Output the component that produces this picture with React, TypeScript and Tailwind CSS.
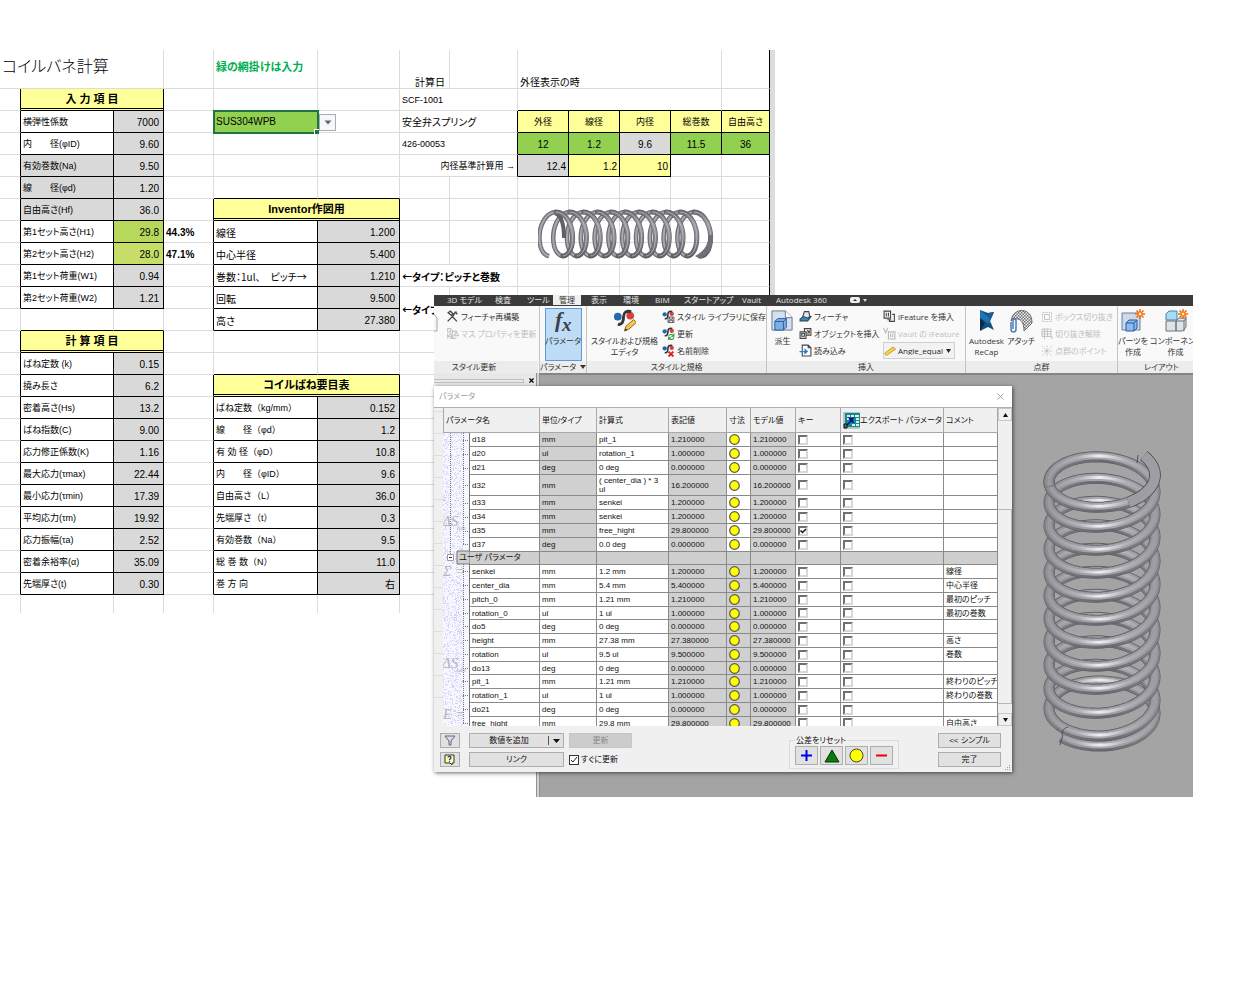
import React from 'react';
import { X } from 'lucide-react';
import clsx from 'clsx';

type Cell = {
  text?: React.ReactNode;
  cls?: string;
  boxed?: boolean;
  span?: number;
  rowSpan?: number;
};

type Param = {
  name: string;
  unit: string;
  formula: string;
  value: string;
  keyed?: boolean;
  comment?: string;
};

const COL_COUNT = 13;
const ROW_COUNT = 25;

const cells: Record<string, Cell> = {};
const put = (r: number, c: number, cell: Cell) => {
  cells[`${r},${c}`] = cell;
};

const LABEL = 'pl-[2px] text-[9px]';
const LABEL_WIDE = "pl-[2px] text-[9px] [font-feature-settings:'palt'_0]";
const LABEL_GRAY = 'pl-[2px] text-[9px] bg-[#d9d9d9]';
const NOTE = "pl-[2px] text-[10px] font-bold font-['Noto_Sans_CJK_JP',sans-serif]";
const NUM = 'pr-1 text-right text-[10px] bg-[#d9d9d9]';
const HEAD = 'text-center text-[11px] font-bold bg-[#ffff99] border-b-[3px] border-double';
const SMALL_HEAD = 'text-center text-[9px] bg-[#ffff99]';
const GREEN = 'text-center text-[10px] bg-[#92d050]';

const inputItems: [string, string, string?][] = [
  ['横弾性係数', '7000'],
  ['内　　径(φID)', '9.60'],
  ['有効巻数(Na)', '9.50', LABEL_GRAY],
  ['線　　径(φd)', '1.20', LABEL_GRAY],
  ['自由高さ(Hf)', '36.0', LABEL_GRAY],
  ['第1セット高さ(H1)', '29.8'],
  ['第2セット高さ(H2)', '28.0'],
  ['第1セット荷重(W1)', '0.94'],
  ['第2セット荷重(W2)', '1.21'],
];

const calcItems: [string, string][] = [
  ['ばね定数 (k)', '0.15'],
  ['撓み長さ', '6.2'],
  ['密着高さ(Hs)', '13.2'],
  ['ばね指数(C)', '9.00'],
  ['応力修正係数(K)', '1.16'],
  ['最大応力(τmax)', '22.44'],
  ['最小応力(τmin)', '17.39'],
  ['平均応力(τm)', '19.92'],
  ['応力振幅(τa)', '2.52'],
  ['密着余裕率(α)', '35.09'],
  ['先端厚さ(t)', '0.30'],
];

const drawItems: [string, string][] = [
  ['線径', '1.200'],
  ['中心半径', '5.400'],
  ['巻数：1ul、　ピッチ→', '1.210'],
  ['回転', '9.500'],
  ['高さ', '27.380'],
];

const specItems: [string, string][] = [
  ['ばね定数（kg/mm）', '0.152'],
  ['線　　径（φd）', '1.2'],
  ['有 効 径（φD）', '10.8'],
  ['内　　径（φID）', '9.6'],
  ['自由高さ（L）', '36.0'],
  ['先端厚さ（t）', '0.3'],
  ['有効巻数（Na）', '9.5'],
  ['総 巻 数（N）', '11.0'],
  ['巻 方 向', '右'],
];

put(0, 0, { text: 'コイルバネ計算', cls: 'pl-[2px] pb-1 text-base font-light', span: 3 });
put(0, 4, { text: '緑の網掛けは入力', cls: 'pl-[2px] pb-1 text-[11px] font-bold text-[#00b050]' });
put(0, 6, { text: '計算日', cls: 'pr-1 text-right align-bottom text-[10px]' });
put(0, 8, { text: '外径表示の時', cls: 'pl-[2px] align-bottom text-[10px]', span: 4 });
put(1, 1, { text: '入 力 項 目', cls: HEAD, boxed: true, span: 2 });
put(1, 6, { text: 'SCF-1001', cls: 'pl-[2px] text-[9px]', span: 2 });
put(1, 8, { span: 4 });
put(2, 4, { text: <MaterialSelect />, cls: 'relative' });
put(2, 6, { text: '安全弁スプリング', cls: 'pl-[2px] text-[10px]', span: 2 });
put(3, 6, { text: '426-00053', cls: 'pl-[2px] text-[9px]', span: 2 });
put(4, 6, { text: '内径基準計算用 →', cls: 'pr-[2px] text-right text-[9px]', span: 2 });
['外径', '線径', '内径', '総巻数', '自由高さ'].forEach((t, i) => put(2, 8 + i, { text: t, cls: SMALL_HEAD, boxed: true }));
['12', '1.2', '9.6', '11.5', '36'].forEach((t, i) =>
  put(3, 8 + i, { text: t, cls: i === 2 ? 'text-center text-[10px] bg-[#d9d9d9]' : GREEN, boxed: true })
);
put(4, 8, { text: '12.4', cls: 'pr-[2px] text-right text-[10px] bg-[#d9d9d9]', boxed: true });
put(4, 9, { text: '1.2', cls: 'pr-[2px] text-right text-[10px] bg-[#ffff99]', boxed: true });
put(4, 10, { text: '10', cls: 'pr-[2px] text-right text-[10px] bg-[#ffff99]', boxed: true });
inputItems.forEach(([label, value, cls], i) => {
  put(2 + i, 1, { text: label, cls: cls || LABEL, boxed: true });
  const bg = i === 5 ? 'bg-[#b8d85c]' : i === 6 ? 'bg-[#c6dd68]' : 'bg-[#d9d9d9]';
  put(2 + i, 2, { text: value, cls: clsx('pr-1 text-right text-[10px]', bg), boxed: true });
});
put(7, 3, { text: '44.3%', cls: 'pl-[2px] text-[10px] font-bold' });
put(8, 3, { text: '47.1%', cls: 'pl-[2px] text-[10px] font-bold' });
put(6, 4, { text: 'Inventor作図用', cls: HEAD, boxed: true, span: 2 });
drawItems.forEach(([label, value], i) => {
  put(7 + i, 4, { text: label, cls: "pl-[2px] text-[10px] font-['Noto_Sans_CJK_JP',sans-serif]", boxed: true });
  put(7 + i, 5, { text: value, cls: NUM, boxed: true });
});
put(9, 6, { text: '←タイプ：ピッチと巻数', cls: NOTE, span: 2 });
put(10, 6, { text: '←タイプ', cls: NOTE, rowSpan: 2 });
put(12, 1, { text: '計 算 項 目', cls: HEAD, boxed: true, span: 2 });
calcItems.forEach(([label, value], i) => {
  put(13 + i, 1, { text: label, cls: LABEL, boxed: true });
  put(13 + i, 2, { text: value, cls: NUM, boxed: true });
});
put(14, 4, { text: 'コイルばね要目表', cls: HEAD, boxed: true, span: 2 });
specItems.forEach(([label, value], i) => {
  put(15 + i, 4, { text: label, cls: LABEL_WIDE, boxed: true });
  put(15 + i, 5, { text: value, cls: NUM, boxed: true });
});

// every grid slot points at the cell that covers it
const owner: Record<string, string> = {};
Object.entries(cells).forEach(([key, cell]) => {
  const [r, c] = key.split(',').map(Number);
  for (let y = 0; y < (cell.rowSpan || 1); y++) {
    for (let x = 0; x < (cell.span || 1); x++) owner[`${r + y},${c + x}`] = key;
  }
});
const isBoxed = (r: number, c: number) => !!cells[owner[`${r},${c}`]]?.boxed;

function MaterialSelect() {
  return (
    <>
      <select
        aria-label="材質"
        className="absolute -left-px -top-px z-10 h-[24px] w-[106px] appearance-none border-2 border-[#217346] bg-[#92d050] pl-px text-[10px] outline-none"
      >
        <option>SUS304WPB</option>
      </select>
      <span className="absolute -bottom-[2px] -right-[2px] z-10 size-[5px] border-l border-t border-white bg-[#217346]" />
      <span className="absolute left-[105px] top-[3px] z-10 flex size-[17px] items-center justify-center border border-[#a8aeb8] bg-[#f6f7f9]">
        <svg width="8" height="5" viewBox="0 0 8 5">
          <path d="M0.5 0.5h7L4 4.5z" fill="#666" />
        </svg>
      </span>
    </>
  );
}

const Sheet: React.FC = () => (
  <div className="relative flex w-max pt-[50px]">
    <table className="w-[770px] table-fixed border-separate border-spacing-0">
      <colgroup>
        <col className="w-[21px]" />
        <col className="w-[93px]" />
        <col className="w-[50px]" />
        <col className="w-[50px]" />
        <col className="w-[104px]" />
        <col className="w-[82px]" />
        <col className="w-[50px]" />
        <col className="w-[68px]" />
        <col className="w-[51px]" />
        <col className="w-[51px]" />
        <col className="w-[51px]" />
        <col className="w-[51px]" />
        <col className="w-[48px]" />
      </colgroup>
      <tbody>
        {[...Array(ROW_COUNT)].map((_, r) => (
          <tr key={r} className={r === 0 ? 'h-[39px]' : r === ROW_COUNT - 1 ? 'h-[18px]' : 'h-[22px]'}>
            {[...Array(COL_COUNT)].map((_, c) => {
              const key = `${r},${c}`;
              if (owner[key] && owner[key] !== key) return null;
              const cell = cells[key] || {};
              const nextCol = c + (cell.span || 1);
              const nextRow = r + (cell.rowSpan || 1);
              const blackRight = cell.boxed || isBoxed(r, nextCol) || nextCol === COL_COUNT;
              const blackBottom = cell.boxed || isBoxed(nextRow, c);
              return (
                <td
                  key={key}
                  colSpan={cell.span}
                  rowSpan={cell.rowSpan}
                  className={clsx(
                    'whitespace-nowrap border-r p-0 leading-none',
                    r > 0 && 'pt-[2px]',
                    r < ROW_COUNT - 1 && !cell.cls?.includes('border-b-') && 'border-b',
                    blackRight ? 'border-r-black' : 'border-r-[#dcdcdc]',
                    blackBottom ? 'border-b-black' : 'border-b-[#dcdcdc]',
                    cell.cls
                  )}
                >
                  {cell.text}
                </td>
              );
            })}
          </tr>
        ))}
      </tbody>
    </table>
    <div className="w-[5px] bg-[#dcdcdc]" />
    <div className="absolute left-[538px] top-[206px]">
      <FlatSpring />
    </div>
  </div>
);

const toPath = (pts: number[][]) => 'M' + pts.map(([x, y]) => `${x.toFixed(1)} ${y.toFixed(1)}`).join('L');

const FlatSpring: React.FC = () => {
  const half = (k: number, front: boolean) => {
    const pts: number[][] = [];
    for (let i = 0; i <= 16; i++) {
      const a = (front ? -90 : 90) + (i * 180) / 16;
      const rad = (a * Math.PI) / 180;
      const turn = k + (a + 90) / 360;
      pts.push([18 + turn * 13.8 + 13 * Math.cos(rad), 28 + 22 * Math.sin(rad)]);
    }
    return toPath(pts);
  };
  const turns = [...Array(11)].map((_, i) => i);
  return (
    <svg width="178" height="56" viewBox="0 0 178 56" fill="none">
      <defs>
        <linearGradient id="flatShade" x1="0" y1="4" x2="0" y2="52" gradientUnits="userSpaceOnUse">
          <stop offset="0" stopColor="#68686e" />
          <stop offset="0.3" stopColor="#98989e" />
          <stop offset="0.6" stopColor="#85858b" />
          <stop offset="1" stopColor="#5c5c62" />
        </linearGradient>
      </defs>
      {[-1, ...turns.slice(0, -1)].map((k) => (
        <g key={k}>
          <path d={half(k, false)} stroke="#707076" strokeWidth="4.6" />
          <path d={half(k, false)} stroke="#a8a8ae" strokeWidth="2" />
        </g>
      ))}
      <path d="M17 7c6 2 9 10 9 25" stroke="#606066" strokeWidth="4" />
      {turns.map((k) => (
        <g key={k}>
          <path d={half(k, true)} stroke="#606066" strokeWidth="5" strokeLinecap="round" />
          <path d={half(k, true)} stroke="url(#flatShade)" strokeWidth="3.8" strokeLinecap="round" />
          <path d={half(k, true)} stroke="#c6c6cc" strokeWidth="1" opacity="0.7" />
        </g>
      ))}
      <path d="M171 29h4c0 11-5 20-13 24l-5-3c8-4 13-10 14-21z" fill="#707077" />
    </svg>
  );
};

// centre line height of each coil where it passes the front
const COILS = [61, 81, 104, 127, 151, 174, 197, 220, 243, 267, 290, 300];

const TallSpring: React.FC = () => {
  const heightAt = (t: number) => {
    const i = Math.max(0, Math.min(COILS.length - 2, Math.floor(t)));
    return COILS[i] + (COILS[i + 1] - COILS[i]) * (t - i);
  };
  const arc = (k: number, from: number, to: number) => {
    const pts: number[][] = [];
    for (let i = 0; i <= 28; i++) {
      const a = from + ((to - from) * i) / 28;
      const rad = (a * Math.PI) / 180;
      const t = k + (a - 90) / 360;
      const base = t < 0 ? COILS[0] + t * 8 : heightAt(t);
      pts.push([62 + 53 * Math.cos(rad), base - 30 + 30 * Math.sin(rad)]);
    }
    return toPath(pts);
  };
  const tube = (d: string, key: string) => (
    <g key={key}>
      <path d={d} stroke="#5a5a60" strokeWidth="11" />
      <path d={d} stroke="url(#tubeBase)" strokeWidth="10" />
      <path d={d} stroke="url(#tubeMid)" strokeWidth="7" transform="translate(0 -1)" />
      <path d={d} stroke="url(#tubeShine)" strokeWidth="3" transform="translate(0 -1)" />
    </g>
  );
  const ks = COILS.map((_, i) => i);
  const face = arc(0, -38, 60);
  return (
    <svg width="124" height="324" viewBox="0 0 124 324" fill="none" role="img" aria-label="コイルばね">
      <defs>
        <linearGradient id="tubeBase" x1="3" y1="0" x2="121" y2="0" gradientUnits="userSpaceOnUse">
          <stop offset="0" stopColor="#808085" />
          <stop offset="0.5" stopColor="#68686e" />
          <stop offset="1" stopColor="#85858a" />
        </linearGradient>
        <linearGradient id="tubeMid" x1="3" y1="0" x2="121" y2="0" gradientUnits="userSpaceOnUse">
          <stop offset="0" stopColor="#8f8f94" />
          <stop offset="0.5" stopColor="#a8a8ae" />
          <stop offset="1" stopColor="#97979c" />
        </linearGradient>
        <linearGradient id="tubeShine" x1="3" y1="0" x2="121" y2="0" gradientUnits="userSpaceOnUse">
          <stop offset="0" stopColor="#96969b" />
          <stop offset="0.3" stopColor="#b2b2b8" />
          <stop offset="0.48" stopColor="#eeeef2" />
          <stop offset="0.7" stopColor="#b2b2b8" />
          <stop offset="1" stopColor="#9a9aa0" />
        </linearGradient>
      </defs>
      {ks.slice(0, -1).reverse().map((k) => tube(arc(k, 180, 360), `b${k}`))}
      {ks.slice().reverse().map((k) => tube(arc(k, k === 0 ? -38 : -2, k === 11 ? 140 : 182), `f${k}`))}
      {tube(arc(0, 170, 215), 'join')}
      <path d={face} stroke="#48484e" strokeWidth="11.4" />
      <path d={face} stroke="#9d9da3" strokeWidth="10" />
      <path d="M98 9l-1 8" stroke="#3c3c42" strokeWidth="0.8" />
      <path d="M20 299l3-10M22 289c0-5 2-7 6-8" stroke="#3c3c42" strokeWidth="0.8" />
    </svg>
  );
};

const ink = '#444';

const StyleGlyph: React.FC<{ size: number; badge?: string }> = ({ size, badge }) => (
  <svg width={size} height={size} viewBox="0 0 24 24" fill="none" className="shrink-0">
    <circle cx="5" cy="8" r="4" fill="#2668a8" />
    <circle cx="18" cy="7" r="4" fill="#d84040" />
    <path d="M19 3c-5-2-8 1-8 5s-1 9-6 8" stroke="#33383f" strokeWidth="3" />
    {badge === 'pencil' && (
      <>
        <path d="M12 23l1.5-5 8-7 3 3-8 7z" fill="#f5c84c" stroke="#8a6418" />
        <path d="M12 23l1-3 2 2z" fill="#333" />
      </>
    )}
    {badge === 'save' && <path d="M11 13h11v10H11zM14 13v4h5v-4M13 23v-4h7v4" fill="#eee" stroke="#444" strokeWidth="1.5" />}
    {badge === 'refresh' && <path d="M12 18a5 5 0 0 1 9-2M22 19a5 5 0 0 1-9 2M22 12v5h-5M12 24v-4h5" stroke="#2f9e3f" strokeWidth="2" />}
    {badge === 'delete' && <path d="M12 14l9 9M21 14l-9 9" stroke="#d81e1e" strokeWidth="3.5" />}
  </svg>
);

const Glyph: React.FC<{ size?: number; children: React.ReactNode }> = ({ size = 13, children }) => (
  <svg width={size} height={size} viewBox="0 0 24 24" fill="none" stroke={ink} strokeWidth="2" className="shrink-0">
    {children}
  </svg>
);

const ToolRow: React.FC<{ icon: React.ReactNode; children: React.ReactNode; disabled?: boolean }> = ({ icon, children, disabled }) => (
  <button disabled={disabled} className={clsx('flex h-[17px] items-center gap-[2px] whitespace-nowrap', disabled ? 'text-[#bdbdbd]' : 'text-[#333]')}>
    {icon}
    {children}
  </button>
);

const BigTool: React.FC<{ icon: React.ReactNode; lines: string[] }> = ({ icon, lines }) => (
  <button className="flex shrink-0 flex-col items-center whitespace-nowrap leading-[11px] text-[#333]">
    <span className="mb-[2px] flex h-[25px] items-center">{icon}</span>
    {lines.map((l) => (
      <span key={l}>{l}</span>
    ))}
  </button>
);

const Group: React.FC<{ title: React.ReactNode; cls: string; children: React.ReactNode }> = ({ title, cls, children }) => (
  <section className={clsx('flex flex-col overflow-hidden border-r border-[#c4c4c4]', cls)}>
    <div className="flex h-[55px] pt-[2px]">{children}</div>
    <h3 className="flex h-[12px] items-center justify-center whitespace-nowrap bg-[#ececec] leading-[12px] text-[#333]">{title}</h3>
  </section>
);

const Ribbon: React.FC = () => (
  <header className="font-['Open_Sans','Noto_Sans_CJK_JP',sans-serif] text-[8px] leading-none">
    <nav className="flex h-[11px] items-center overflow-hidden whitespace-nowrap bg-[#3b3b3b] pb-[2px] pl-[13px] text-[#e4e4e4]">
      <a href="#model" className="w-[48px]">3D モデル</a>
      <a href="#inspect" className="w-[32px]">検査</a>
      <a href="#tool" className="w-[26px]">ツール</a>
      <a href="#manage" className="flex h-[11px] w-[28px] items-center justify-center bg-[#f0f0f0] text-[#333]">管理</a>
      <a href="#view" className="ml-[10px] w-[32px]">表示</a>
      <a href="#env" className="w-[32px]">環境</a>
      <a href="#bim" className="w-[29px]">BIM</a>
      <a href="#startup" className="w-[58px]">スタートアップ</a>
      <a href="#vault" className="w-[34px]">Vault</a>
      <a href="#a360" className="w-[74px]">Autodesk 360</a>
      <svg width="18" height="8" viewBox="0 0 18 8">
        <rect x="0" y="1" width="10" height="6" rx="2" fill="#eee" />
        <path d="M3 5l2-2 2 2z" fill="#333" />
        <path d="M13 3h4l-2 3z" fill="#ddd" />
      </svg>
    </nav>
    <div className="flex bg-[#f9f9f9]">
      <Group title={<span className="mr-6">スタイル更新</span>} cls="w-[106px] shrink-0 pr-[1px]">
        <svg width="4" height="24" viewBox="0 0 4 24" className="mt-1 shrink-0">
          <path d="M0 2l3 4v13H0" fill="#f4f4f4" stroke="#a8a8a8" />
        </svg>
        <div className="pl-[8px]">
          <ToolRow icon={<Glyph><path d="M4 5l4-3 5 5-3 3zM9 9l11 12M20 4c-5 0-5 4-6 6L3 21M16 3l5 5" strokeWidth="2.5" /></Glyph>}>フィーチャ再構築</ToolRow>
          <ToolRow disabled icon={<Glyph><path d="M3 3h6v6H3zM12 5v16M7 21h12M12 8h9M8 12l-4 6h7zM19 9l-4 7h8zM3 12v9" stroke="#c4c4c4" /></Glyph>}>マス プロパティを更新</ToolRow>
        </div>
      </Group>
      <Group
        title={
          <>
            パラメータ
            <svg width="6" height="4" viewBox="0 0 6 4" className="ml-1">
              <path d="M0 0h6L3 4z" fill="#333" />
            </svg>
          </>
        }
        cls="w-[47px] shrink-0"
      >
        <button className="mx-auto flex h-[53px] w-[37px] flex-col items-center border border-[#5a9bd8] bg-[#bfdcf6] text-[#333]">
          <svg width="34" height="28" viewBox="0 0 34 28">
            <text x="9" y="18" fontFamily="Liberation Serif, serif" fontStyle="italic" fontWeight="bold" fontSize="22" fill="#3c4148">f</text>
            <text x="16" y="22" fontFamily="Liberation Serif, serif" fontStyle="italic" fontWeight="bold" fontSize="19" fill="#3c4148">x</text>
          </svg>
          <span className="whitespace-nowrap">パラメータ</span>
        </button>
      </Group>
      <Group title="スタイルと規格" cls="w-[180px] shrink-0">
        <div className="w-[75px] shrink-0">
          <div className="flex justify-center">
            <BigTool icon={<StyleGlyph size={23} badge="pencil" />} lines={['スタイルおよび規格', 'エディタ']} />
          </div>
        </div>
        <div>
          <ToolRow icon={<StyleGlyph size={13} badge="save" />}>スタイル ライブラリに保存</ToolRow>
          <ToolRow icon={<StyleGlyph size={13} badge="refresh" />}>更新</ToolRow>
          <ToolRow icon={<StyleGlyph size={13} badge="delete" />}>名前削除</ToolRow>
        </div>
      </Group>
      <Group title="挿入" cls="w-[199px] shrink-0">
        <div className="w-[32px] shrink-0 pl-1">
          <BigTool
            icon={
              <Glyph size={23}>
                <path d="M1 2h14l7 7v13H1z" fill="#d3e0ee" stroke="#66788c" strokeWidth="1" />
                <path d="M15 2v7h7" fill="#fff" stroke="#66788c" strokeWidth="1" />
                <path d="M4 13l3-3h9v9l-3 3H4z" fill="#7eaee6" stroke="#2a5c9c" strokeWidth="1" />
                <path d="M4 13h9v9M13 13l3-3" stroke="#2a5c9c" strokeWidth="1" />
              </Glyph>
            }
            lines={['派生']}
          />
        </div>
        <div className="w-[84px] shrink-0">
          <ToolRow icon={<Glyph><path d="M2 17l6-5h14l-6 8H2z" fill="#3a8ac0" stroke="#245" /><path d="M7 12l3-9h8l2 9-4 3z" fill="#dce8f2" /></Glyph>}>フィーチャ</ToolRow>
          <ToolRow icon={<Glyph><path d="M2 9h11v12H2zM10 9V3h12v12h-9M5 12h5v5H5zM15 6l4 4M19 6v5h-5" /></Glyph>}>オブジェクトを挿入</ToolRow>
          <ToolRow icon={<Glyph><path d="M6 2h11l5 5v15H6zM17 2v5h5" fill="#fff" /><path d="M1 13h9V8l7 6-7 6v-5H1z" fill="#2a7fd0" stroke="none" /></Glyph>}>読み込み</ToolRow>
        </div>
        <div>
          <ToolRow icon={<Glyph><path d="M2 2h12v13H2zM6 5v7M10 5v7M8 18h7M17 8h4v13h-9v-3" /></Glyph>}>iFeature を挿入</ToolRow>
          <ToolRow disabled icon={<Glyph><path d="M1 2l4 9 4-9M10 9h12v13H10zM14 12v7M18 12v7" stroke="#b8b8b8" /></Glyph>}>Vault の iFeature</ToolRow>
          <div className="relative h-[17px] w-[72px] border border-[#cfcfcf] bg-[#f2f2f2]">
            <svg width="12" height="10" viewBox="0 0 12 10" className="absolute left-0 top-[3px]">
              <path d="M0.5 7.5L9 1l2.5 2L2.5 9.5z" fill="#ffd23c" stroke="#c08a10" strokeWidth="0.8" />
            </svg>
            <select aria-label="iMate" className="h-full w-full appearance-none bg-transparent pl-[14px] leading-none text-[#222] outline-none">
              <option>Angle_equal</option>
            </select>
            <svg width="5" height="4" viewBox="0 0 5 4" className="absolute right-[3px] top-[6px]">
              <path d="M0 0h5L2.5 4z" fill="#222" />
            </svg>
          </div>
        </div>
      </Group>
      <Group title="点群" cls="w-[152px] shrink-0">
        <div className="flex w-[75px] shrink-0 gap-[3px] pl-[3px]">
          <BigTool
            icon={
              <svg width="18" height="23" viewBox="0 0 18 23">
                <path d="M2 1l8 3 6-1-4 9 4 9-6-3-8 4z" fill="#14507f" />
                <path d="M2 1l10 8-1 6-9-6z" fill="#1d74b4" />
                <path d="M2 9l5 5-5 8z" fill="#0b2a4c" />
                <path d="M10 4l6-1-4 9z" fill="#1a5f96" />
              </svg>
            }
            lines={['Autodesk', 'ReCap']}
          />
          <BigTool
            icon={
              <svg width="24" height="24" viewBox="0 0 24 24" fill="none">
                <defs>
                  <pattern id="dots" width="3" height="3" patternUnits="userSpaceOnUse">
                    <rect width="3" height="3" fill="#f2f2f2" />
                    <path d="M0 0h1.5v1.5H0zM1.5 1.5H3V3H1.5z" fill="#707070" />
                  </pattern>
                </defs>
                <path d="M2 12C3 4 10 0 16 2c5 2 7 6 7 12l-8 8c0-7-2-11-6-12-3-1-5 0-7 2z" fill="url(#dots)" stroke="#666" />
                <path d="M2 13v7c0 4 5 4 5 0v-8c0-3-3-3-3 0v8" stroke="#4a7db0" strokeWidth="1.5" />
              </svg>
            }
            lines={['アタッチ']}
          />
        </div>
        <div>
          <ToolRow disabled icon={<Glyph size={12}><path d="M3 3h18v18H3z" stroke="#c4c4c4" strokeDasharray="4 2" /><path d="M7 7h10v10H7z" stroke="#c4c4c4" /></Glyph>}>ボックス切り抜き</ToolRow>
          <ToolRow disabled icon={<Glyph size={12}><path d="M2 2h18v15H2zM2 7h18M2 12h18M7 2v20M13 2v15M16 17h6v5" stroke="#c4c4c4" /></Glyph>}>切り抜き解除</ToolRow>
          <ToolRow disabled icon={<Glyph size={12}><path d="M2 2l20 20M22 2L2 22M12 1v22M1 12h22" stroke="#c4c4c4" strokeDasharray="3 2" /><circle cx="12" cy="12" r="3" fill="#c4c4c4" stroke="none" /></Glyph>}>点群のポイント</ToolRow>
        </div>
      </Group>
      <Group title={<span className="ml-3">レイアウト</span>} cls="min-w-0 flex-1 border-r-0">
        <div className="flex gap-[2px]">
          <BigTool
            icon={
              <Glyph size={24}>
                <path d="M1 4h18v17H1z" fill="#cbd9e8" stroke="#667f9c" strokeWidth="1" />
                <path d="M5 14l3-3h8v8l-3 3H5zM5 14h8v8M13 14l3-3" fill="#8dbaf0" stroke="#275c9e" strokeWidth="1" />
                <path d="M19 0v10M14 5h10M15.5 1.5l7 7M22.5 1.5l-7 7" stroke="#ee6a10" strokeWidth="1.5" />
                <circle cx="19" cy="5" r="2" fill="#fff6a0" stroke="#ee6a10" strokeWidth="1" />
              </Glyph>
            }
            lines={['パーツを', '作成']}
          />
          <BigTool
            icon={
              <Glyph size={24}>
                <path d="M2 5l3-3h8v9H2z" fill="#a8dcf4" stroke="#4684a8" strokeWidth="1" />
                <path d="M2 12h10v10H2zM12 12l3-3h7v9l-3 4h-7zM12 12h8v10M20 12l2-3" fill="#dfe3e8" stroke="#68727c" strokeWidth="1" />
                <path d="M19 0v10M14 5h10M15.5 1.5l7 7M22.5 1.5l-7 7" stroke="#ee6a10" strokeWidth="1.5" />
                <circle cx="19" cy="5" r="2" fill="#fff6a0" stroke="#ee6a10" strokeWidth="1" />
              </Glyph>
            }
            lines={['コンポーネント', '作成']}
          />
        </div>
      </Group>
    </div>
  </header>
);

const modelParams: Param[] = [
  { name: 'd18', unit: 'mm', formula: 'pit_1', value: '1.210000' },
  { name: 'd20', unit: 'ul', formula: 'rotation_1', value: '1.000000' },
  { name: 'd21', unit: 'deg', formula: '0 deg', value: '0.000000' },
  { name: 'd32', unit: 'mm', formula: '( center_dia ) * 3\nul', value: '16.200000' },
  { name: 'd33', unit: 'mm', formula: 'senkei', value: '1.200000' },
  { name: 'd34', unit: 'mm', formula: 'senkei', value: '1.200000' },
  { name: 'd35', unit: 'mm', formula: 'free_hight', value: '29.800000', keyed: true },
  { name: 'd37', unit: 'deg', formula: '0.0 deg', value: '0.000000' },
];

const userParams: Param[] = [
  { name: 'senkei', unit: 'mm', formula: '1.2 mm', value: '1.200000', comment: '線径' },
  { name: 'center_dia', unit: 'mm', formula: '5.4 mm', value: '5.400000', comment: '中心半径' },
  { name: 'pitch_0', unit: 'mm', formula: '1.21 mm', value: '1.210000', comment: '最初のピッチ' },
  { name: 'rotation_0', unit: 'ul', formula: '1 ul', value: '1.000000', comment: '最初の巻数' },
  { name: 'do5', unit: 'deg', formula: '0 deg', value: '0.000000' },
  { name: 'height', unit: 'mm', formula: '27.38 mm', value: '27.380000', comment: '高さ' },
  { name: 'rotation', unit: 'ul', formula: '9.5 ul', value: '9.500000', comment: '巻数' },
  { name: 'do13', unit: 'deg', formula: '0 deg', value: '0.000000' },
  { name: 'pit_1', unit: 'mm', formula: '1.21 mm', value: '1.210000', comment: '終わりのピッチ' },
  { name: 'rotation_1', unit: 'ul', formula: '1 ul', value: '1.000000', comment: '終わりの巻数' },
  { name: 'do21', unit: 'deg', formula: '0 deg', value: '0.000000' },
  { name: 'free_hight', unit: 'mm', formula: '29.8 mm', value: '29.800000', comment: '自由高さ' },
];

const TreeStrip: React.FC = () => {
  let seed = 7;
  const rand = () => {
    seed = (seed * 16807) % 2147483647;
    return seed / 2147483647;
  };
  let specks = '';
  for (let i = 0; i < 1500; i++) specks += `M${Math.floor(rand() * 20)} ${Math.floor(rand() * 293)}h1v1h-1z`;
  const ticks = [7, 21, 35, 52, 70, 84, 98, 111, 138, 152, 166, 180, 193, 207, 221, 235, 248, 262, 276, 290];
  return (
    <svg width="27" height="293" viewBox="0 0 27 293" fill="none" className="block">
      <rect width="27" height="293" fill="#f6f6fe" />
      <path d={specks} fill="#d3d3f7" />
      <g fontFamily="Liberation Serif, serif" fontStyle="italic" fill="#b4b4bc">
        <text x="-1" y="93" fontSize="15">ΔS</text>
        <text x="14" y="97" fontSize="7">um</text>
        <text x="0" y="143" fontSize="14">Σ =</text>
        <text x="-1" y="235" fontSize="15">ΔS</text>
        <text x="14" y="239" fontSize="7">um</text>
        <text x="0" y="286" fontSize="14">E =</text>
      </g>
      <path d="M7.5 0v124M20.5 0v111M20.5 131v160" stroke="#777" strokeDasharray="1 1" />
      {ticks.map((y) => (
        <path key={y} d={`M20 ${y}.5h6`} stroke="#777" strokeDasharray="1 1" />
      ))}
      <path d="M4.5 121.5h6v6h-6z" fill="#fff" stroke="#999" />
      <path d="M6 124.5h3" stroke="#333" />
      <path d="M14 118h13v13H14z" fill="#cfcfcf" stroke="#777" />
      <path d="M26.5 0v118M26.5 131v162" stroke="#777" />
    </svg>
  );
};

const td = 'border-b border-r border-[#8a8a8a] p-0 pl-[2px] whitespace-nowrap overflow-hidden';

const Tick: React.FC<{ label: string; checked?: boolean }> = ({ label, checked }) => (
  <span className="relative block size-[10px]">
    <input
      type="checkbox"
      aria-label={label}
      defaultChecked={checked}
      className="block size-[10px] appearance-none border-2 border-b-[#d8d8d8] border-r-[#d8d8d8] border-l-[#707070] border-t-[#707070] bg-white"
    />
    {checked && (
      <svg width="8" height="8" viewBox="0 0 8 8" fill="none" className="pointer-events-none absolute left-px top-px">
        <path d="M1.5 3.5L3.5 5.5L7 2" stroke="#111" strokeWidth="1.5" />
      </svg>
    )}
  </span>
);

const ParamCells: React.FC<{ p: Param; user?: boolean }> = ({ p, user }) => (
  <>
    <td className={clsx(td, 'bg-white')}>{p.name}</td>
    <td className={clsx(td, user ? 'bg-white' : 'bg-[#d0d0d0]')}>{p.unit}</td>
    <td className={clsx(td, 'bg-white', p.name === 'd32' && 'whitespace-pre-line! leading-[9px]')}>{p.formula}</td>
    <td className={clsx(td, 'bg-[#d0d0d0]')}>{p.value}</td>
    <td className={clsx(td, user ? 'bg-[#d0d0d0]' : 'bg-white')}>
      <svg width="11" height="11" viewBox="0 0 11 11" className="block">
        <circle cx="5.5" cy="5.5" r="4.8" fill="#ffff00" stroke="#555" strokeWidth="1.2" />
      </svg>
    </td>
    <td className={clsx(td, 'bg-[#d0d0d0]')}>{p.value}</td>
    <td className={clsx(td, 'bg-white')}>
      <Tick label={`${p.name} キー`} checked={p.keyed} />
    </td>
    <td className={clsx(td, 'bg-white')}>
      <Tick label={`${p.name} エクスポート`} />
    </td>
    <td className={clsx(td, 'bg-white')}>{p.comment}</td>
  </>
);

const DlgButton: React.FC<{ cls?: string; disabled?: boolean; label?: string; children: React.ReactNode }> = ({ cls, disabled, label, children }) => (
  <button
    disabled={disabled}
    aria-label={label}
    className={clsx(
      'flex h-[15px] items-center justify-center border leading-none',
      disabled ? 'border-[#c6c6c6] bg-[#cccccc] text-[#8a8a8a]' : 'border-[#adadad] bg-[#e1e1e1] text-[#111]',
      cls
    )}
  >
    {children}
  </button>
);

const headers = ['単位/タイプ', '計算式', '表記値', '寸法', 'モデル値', 'キー'];

const ParamDialog: React.FC = () => (
  <div role="dialog" aria-label="パラメータ" className="absolute left-0 top-[91px] w-[578px] bg-[#f0f0f0] text-[8px] text-[#111] shadow-[1px_1px_4px_rgba(0,0,0,0.6)]">
    <div className="flex h-[21px] items-center justify-between bg-white pl-[5px] pr-[6px] text-[#9a9a9a]">
      <span>パラメータ</span>
      <button aria-label="閉じる">
        <X size={11} strokeWidth={2} />
      </button>
    </div>
    <div className="flex h-[319px] overflow-hidden border-t border-[#b0b0b0]">
      <div className="flex w-[9px] shrink-0 flex-col pt-[3px]">
        {[...Array(14)].map((_, i) => (
          <i key={i} className="h-[22px] border-t border-[#dedede]" />
        ))}
      </div>
      <table className="w-[555px] shrink-0 table-fixed border-separate border-spacing-0 self-start leading-[11px]">
        <colgroup>
          <col className="w-[27px]" />
          <col className="w-[70px]" />
          <col className="w-[57px]" />
          <col className="w-[72px]" />
          <col className="w-[58px]" />
          <col className="w-[24px]" />
          <col className="w-[45px]" />
          <col className="w-[45px]" />
          <col className="w-[103px]" />
          <col className="w-[54px]" />
        </colgroup>
        <thead>
          <tr className="h-[25px] bg-[#f0f0f0] text-left">
            <th colSpan={2} className="border-b border-l border-r border-[#a8a8a8] p-0 pl-[2px] font-normal">パラメータ名</th>
            {headers.map((h) => (
              <th key={h} className="whitespace-nowrap border-b border-r border-[#a8a8a8] p-0 pl-[2px] font-normal">{h}</th>
            ))}
            <th className="border-b border-r border-[#a8a8a8] p-0 pl-[2px] font-normal">
              <span className="flex items-center whitespace-nowrap">
                <svg width="17" height="17" viewBox="0 0 17 17" fill="none" className="shrink-0">
                  <rect width="17" height="17" fill="#c0c0c0" />
                  <rect x="2" y="1" width="15" height="14" fill="#128a8a" />
                  <path d="M4 3h3v2H4zM8 3h3v2H8zM12 3h4v2h-4zM4 6h2v2H4zM13 6h3v2h-3zM13 9h3v2h-3zM9 12h3v2H9zM13 12h3v2h-3z" fill="#d8f0f0" />
                  <path d="M3 13l4-4-2-4 3 1 3-1-1 3 1 3-3-1-4 4z" fill="#0a0a90" />
                  <path d="M1 12h3v4H1z" fill="#128a8a" stroke="#111" />
                </svg>
                エクスポート パラメータ
              </span>
            </th>
            <th className="border-b border-r border-[#a8a8a8] p-0 pl-[2px] font-normal">コメント</th>
          </tr>
        </thead>
        <tbody>
          {modelParams.map((p, i) => (
            <tr key={p.name} className={p.name === 'd32' ? 'h-[21px]' : 'h-[14px]'}>
              {i === 0 && (
                <td rowSpan={21} className="p-0 align-top">
                  <TreeStrip />
                </td>
              )}
              <ParamCells p={p} />
            </tr>
          ))}
          <tr className="h-[13px] bg-[#cfcfcf]">
            <td className="relative border-b border-r border-[#8a8a8a] p-0">
              <span className="absolute -left-[11px] top-0 whitespace-nowrap">ユーザ パラメータ</span>
            </td>
            {[...Array(8)].map((_, i) => (
              <td key={i} className={td} />
            ))}
          </tr>
          {userParams.map((p, i) => (
            <tr key={p.name} className={i % 4 === 3 ? 'h-[13px]' : 'h-[14px]'}>
              <ParamCells p={p} user />
            </tr>
          ))}
        </tbody>
      </table>
      <div className="flex flex-1 flex-col justify-between bg-[#f0f0f0]">
        <button aria-label="上へ" className="flex h-[13px] w-full items-center justify-center border border-[#c8c8c8]">
          <svg width="5" height="4" viewBox="0 0 5 4"><path d="M0 4h5L2.5 0z" fill="#111" /></svg>
        </button>
        <div className="mb-[9px] mt-auto h-[195px] border-b border-r border-t border-[#b8b8b8] bg-[#f0f0f0]" />
        <button aria-label="下へ" className="flex h-[13px] w-full items-center justify-center border border-[#c8c8c8]">
          <svg width="5" height="4" viewBox="0 0 5 4"><path d="M0 0h5L2.5 4z" fill="#111" /></svg>
        </button>
      </div>
    </div>
    <div className="relative flex h-[46px] pl-[6px] pr-[11px] pt-[7px]">
      <div className="flex flex-col gap-1">
        <DlgButton cls="w-[20px]" label="フィルタ">
          <svg width="12" height="11" viewBox="0 0 12 11"><path d="M1 1h10L7 6v4H5V6z" fill="#d4dce6" stroke="#667" /></svg>
        </DlgButton>
        <DlgButton cls="w-[20px]" label="ヘルプ">
          <svg width="12" height="12" viewBox="0 0 12 12" fill="none">
            <path d="M1 1h9v8H8v2L6 9H1z" fill="#ffffa8" stroke="#333" />
            <path d="M4 3.5c0-1.5 3-1.5 3 0S5.5 5 5.5 6.2M5.5 7.2v1" stroke="#1030b0" strokeWidth="1.2" />
          </svg>
        </DlgButton>
      </div>
      <div className="ml-[9px] flex w-[95px] flex-col gap-1">
        <DlgButton>
          <span className="flex-1">数値を追加</span>
          <span className="flex h-[9px] w-[15px] items-center justify-center border-l border-[#555]">
            <svg width="7" height="4" viewBox="0 0 7 4"><path d="M0 0h7L3.5 4z" fill="#111" /></svg>
          </span>
        </DlgButton>
        <DlgButton>リンク</DlgButton>
      </div>
      <div className="ml-[5px] flex w-[63px] flex-col gap-1">
        <DlgButton disabled>更新</DlgButton>
        <label className="flex h-[15px] items-center gap-[2px] whitespace-nowrap">
          <span className="relative block size-[10px]">
            <input type="checkbox" defaultChecked className="block size-[10px] appearance-none border border-[#333] bg-white" />
            <svg width="8" height="8" viewBox="0 0 8 8" fill="none" className="pointer-events-none absolute left-px top-px">
              <path d="M1 4l2 2 4-5" stroke="#222" />
            </svg>
          </span>
          すぐに更新
        </label>
      </div>
      <fieldset className="ml-auto mr-[39px] h-[36px] w-[110px] border border-[#dcdcdc] px-[5px]">
        <legend className="px-px leading-[15px]">公差をリセット</legend>
        <div className="-mt-[2px] flex gap-[2px]">
          <DlgButton cls="h-[19px]! w-[23px]" label="正">
            <svg width="13" height="13" viewBox="0 0 13 13"><path d="M6.5 1v11M1 6.5h11" stroke="#0000ee" strokeWidth="2" /></svg>
          </DlgButton>
          <DlgButton cls="h-[19px]! w-[23px]" label="中央">
            <svg width="16" height="14" viewBox="0 0 16 14"><path d="M8 1l7 12H1z" fill="#008000" stroke="#222" /></svg>
          </DlgButton>
          <DlgButton cls="h-[19px]! w-[23px]" label="呼び">
            <svg width="15" height="15" viewBox="0 0 15 15"><circle cx="7.5" cy="7.5" r="6.5" fill="#ffff00" stroke="#444" /></svg>
          </DlgButton>
          <DlgButton cls="h-[19px]! w-[23px]" label="負">
            <svg width="13" height="13" viewBox="0 0 13 13"><path d="M1 6.5h11" stroke="#ee0000" strokeWidth="2" /></svg>
          </DlgButton>
        </div>
      </fieldset>
      <div className="flex w-[63px] flex-col gap-1">
        <DlgButton>&lt;&lt; シンプル</DlgButton>
        <DlgButton>完了</DlgButton>
      </div>
      <svg width="6" height="6" viewBox="0 0 6 6" className="absolute bottom-px right-px">
        <path d="M4 0h1v1H4zM4 2h1v1H4zM4 4h1v1H4zM2 2h1v1H2zM2 4h1v1H2zM0 4h1v1H0z" fill="#999" />
      </svg>
    </div>
  </div>
);

const InventorWindow: React.FC = () => (
  <div className="absolute left-[434px] right-[40px] top-[295px] z-20 min-w-[759px]">
    <Ribbon />
    <div className="flex h-[424px]">
      <div className="w-[102px] shrink-0 bg-white">
        <div className="flex h-[13px] items-center gap-1 bg-[#e8e8e8] pt-[2px]">
          <span className="h-1 flex-1 border-y border-r border-[#c0c0c0]" />
          <X size={7} strokeWidth={4} className="mr-px" />
        </div>
      </div>
      <div className="w-[4px] shrink-0 border-x border-[#909090] bg-[#d4d4d4]" />
      <div className="flex flex-1 justify-end border-t-2 border-[#858585] bg-[#a4a4a4] pr-[29px] pt-[71px]">
        <TallSpring />
      </div>
    </div>
    <ParamDialog />
  </div>
);

const App: React.FC = () => (
  <main className="relative min-h-screen overflow-x-hidden bg-white font-['Liberation_Sans','Noto_Sans_CJK_JP',sans-serif] text-black [font-feature-settings:'palt']">
    <Sheet />
    <InventorWindow />
  </main>
);

export default App;
